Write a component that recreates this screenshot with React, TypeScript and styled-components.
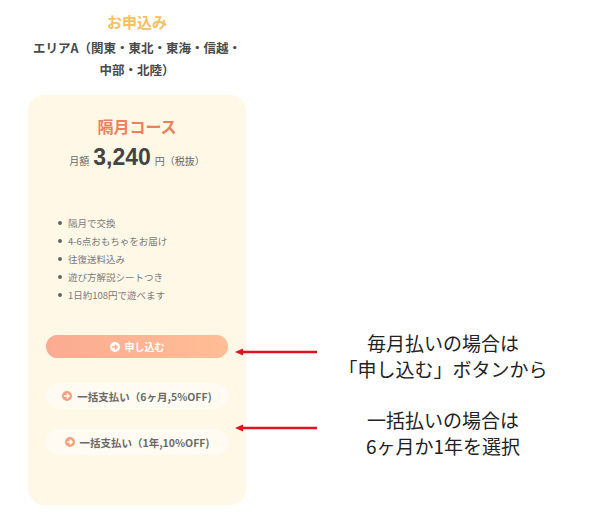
import React from 'react';
import styled, { createGlobalStyle } from 'styled-components';

const GlobalStyle = createGlobalStyle`
  body {
    margin: 0;
    background: #ffffff;
    font-family: "Noto Sans CJK JP", "Noto Sans", sans-serif;
  }
`;

const Page = styled.div`
  position: relative;
  width: 600px;
  height: 514px;
  overflow: hidden;
  background: #ffffff;
`;

const Column = styled.div`
  width: 274px;
  display: flex;
  flex-direction: column;
  align-items: center;
  padding-top: 11px;
`;

const Heading = styled.h1`
  margin: 0;
  font-size: 15px;
  line-height: 22px;
  font-weight: 700;
  color: #f5c060;
`;

const Area = styled.p`
  margin: 4px 0 0;
  width: 230px;
  font-size: 12.5px;
  line-height: 22px;
  font-weight: 700;
  color: #4a4a4a;
  text-align: center;
`;

const Card = styled.section`
  box-sizing: border-box;
  margin-top: 14px;
  width: 218px;
  height: 410px;
  border-radius: 16px;
  background: #fff8e7;
  padding: 18px 18px 0;
  display: flex;
  flex-direction: column;
  align-items: center;
`;

const CourseTitle = styled.h2`
  margin: 0;
  font-size: 16px;
  line-height: 26px;
  font-weight: 700;
  color: #ef7f5c;
`;

const Price = styled.div`
  margin-top: 5px;
  display: flex;
  align-items: baseline;
  gap: 4px;
  color: #666;
  font-size: 10px;
`;

const Amount = styled.span`
  font-family: "Liberation Sans", "Noto Sans", sans-serif;
  font-size: 23px;
  font-weight: 700;
  color: #444;
  line-height: 26px;
`;

const Features = styled.ul`
  align-self: stretch;
  margin: 44px 0 0;
  padding: 0 0 0 12px;
  list-style: none;
  display: flex;
  flex-direction: column;
`;

const Feature = styled.li`
  position: relative;
  padding-left: 10px;
  font-size: 9.5px;
  line-height: 18px;
  color: #7a7a7a;

  &::before {
    content: '';
    position: absolute;
    left: 0;
    top: 7px;
    width: 4px;
    height: 4px;
    border-radius: 50%;
    background: #666;
  }
`;

const Actions = styled.div`
  align-self: stretch;
  margin-top: 31px;
  display: flex;
  flex-direction: column;
`;

const Button = styled.button<{ primary?: boolean; gapTop?: number }>`
  box-sizing: border-box;
  margin-top: ${(p) => p.gapTop || 0}px;
  height: ${(p) => (p.primary ? 23 : 26)}px;
  border: none;
  border-radius: ${(p) => (p.primary ? 12 : 13)}px;
  background: ${(p) =>
    p.primary ? 'linear-gradient(90deg, #fbab92 0%, #ffbe95 100%)' : '#fffbf3'};
  color: ${(p) => (p.primary ? '#ffffff' : '#6a6a6a')};
  font-family: inherit;
  font-size: ${(p) => (p.primary ? 10 : 10.5)}px;
  font-weight: 700;
  display: flex;
  align-items: center;
  justify-content: center;
  gap: 5px;
  padding: 0;
  cursor: pointer;
`;

const Overlay = styled.div<{ top: number }>`
  position: absolute;
  left: 234px;
  top: ${(p) => p.top}px;
  display: flex;
  align-items: flex-start;
  gap: 20px;
`;

const Arrow = styled.svg<{ offset: number }>`
  margin-top: ${(p) => p.offset}px;
  flex: none;
`;

const Note = styled.p`
  margin: 0;
  width: 210px;
  font-size: 19px;
  line-height: 26px;
  color: #222;
  text-align: center;
`;

const CircleArrow = ({ color, fg }: { color: string; fg: string }) => (
  <svg width="10" height="10" viewBox="0 0 10 10">
    <circle cx="5" cy="5" r="5" fill={color} />
    <path d="M2.6 5h4.4M5.2 3l2 2-2 2" stroke={fg} strokeWidth="1.4" fill="none" strokeLinecap="round" strokeLinejoin="round" />
  </svg>
);

const RedArrow = ({ offset }: { offset: number }) => (
  <Arrow offset={offset} width="84" height="8" viewBox="0 0 84 8">
    <path d="M7 4h76" stroke="#e0141e" strokeWidth="2.4" />
    <path d="M1 4l8-3.6v7.2z" fill="#e0141e" />
  </Arrow>
);

const features = [
  '隔月で交換',
  '4-6点おもちゃをお届け',
  '往復送料込み',
  '遊び方解説シートつき',
  '1日約108円で遊べます',
];

export default function App() {
  return (
    <Page>
      <GlobalStyle />
      <Column>
        <Heading>お申込み</Heading>
        <Area>
          エリアA（関東・東北・東海・信越・
          <br />
          中部・北陸）
        </Area>
        <Card>
          <CourseTitle>隔月コース</CourseTitle>
          <Price>
            <span>月額</span>
            <Amount>3,240</Amount>
            <span>円（税抜）</span>
          </Price>
          <Features>
            {features.map((f) => (
              <Feature key={f}>{f}</Feature>
            ))}
          </Features>
          <Actions>
            <Button primary>
              <CircleArrow color="#ffffff" fg="#fcb090" />
              申し込む
            </Button>
            <Button gapTop={25}>
              <CircleArrow color="#f3a27c" fg="#ffffff" />
              一括支払い（6ヶ月,5%OFF)
            </Button>
            <Button gapTop={20}>
              <CircleArrow color="#f3a27c" fg="#ffffff" />
              一括支払い（1年,10%OFF)
            </Button>
          </Actions>
        </Card>
      </Column>
      <Overlay top={330}>
        <RedArrow offset={18} />
        <Note>
          毎月払いの場合は
          <br />
          「申し込む」ボタンから
        </Note>
      </Overlay>
      <Overlay top={407}>
        <RedArrow offset={17} />
        <Note>
          一括払いの場合は
          <br />
          6ヶ月か1年を選択
        </Note>
      </Overlay>
    </Page>
  );
}
